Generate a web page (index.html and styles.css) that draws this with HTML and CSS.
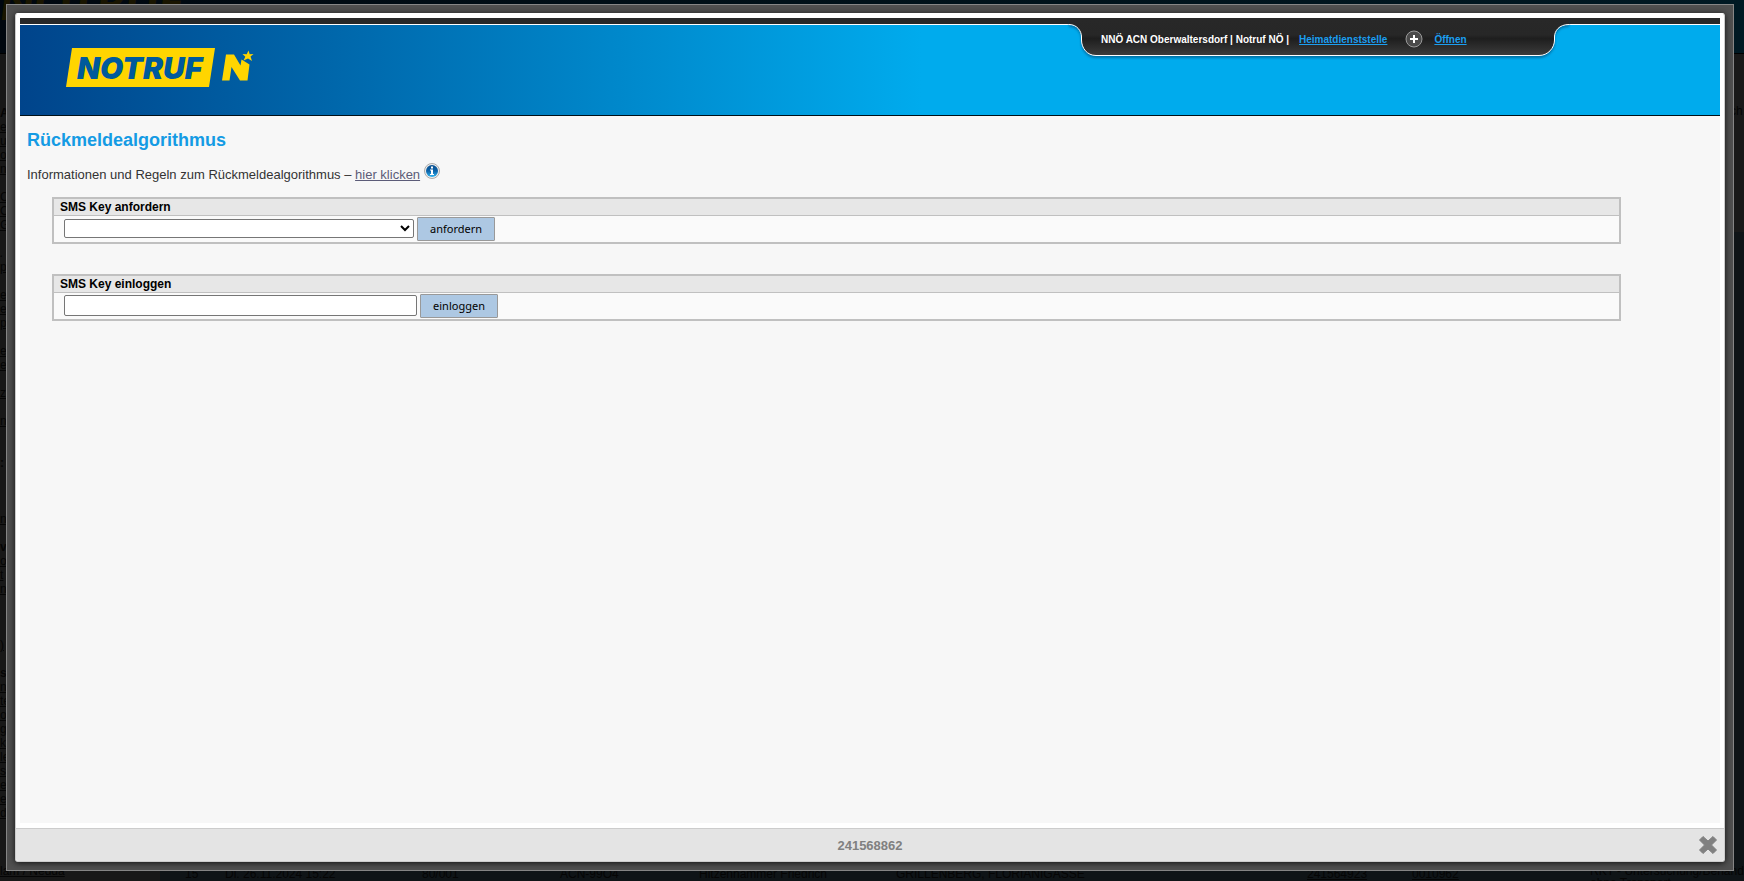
FILE: index.html
```html
<!DOCTYPE html>
<html lang="de">
<head>
<meta charset="utf-8">
<title>Rückmeldealgorithmus</title>
<link rel="stylesheet" href="styles.css">
</head>
<body>
<div class="backdrop" aria-hidden="true">
  <div class="backdrop-banner"><span>NOTRUF</span></div>
  <div class="backdrop-body">
    <div class="backdrop-menu">
      <b>A</b><u>e</u><u>u</u><u>oc</u><u>ni</u><i></i><u>Ob</u><u>Ob</u><u>Gr</u><i></i><i>.</i><u>pe</u><i></i><u>e</u><u>er</u><u>pe</u><i></i><u>er</u><u>er</u><i></i><u>zt</u><i></i><u>nc</u><i></i><i></i><b>:</b><i></i><i></i><i></i><u>ne</u><i></i><b>v</b><u>ou</u><u>t</u><u>n</u><i></i><i></i><i></i><u>)</u><i></i><b>s</b><u>ng</u><u>te</u><u>o</u><u>gr</u><u>ke</u><u>le</u><u>s</u><u>e</u><u>e</u><u>d</u>
    </div>
    <div class="backdrop-aside"><span>ch</span></div>
  </div>
  <div class="backdrop-row">
    <u class="cell-tight">lam / Nedda</u>
    <span>15</span>
    <span>Di. 26.11.2024 15:22</span>
    <span>80/001</span>
    <span>ACN-99O4</span>
    <span>Hitzenhammer Friedrich</span>
    <span>GRILLENBERG, FLORIANIGASSE</span>
    <u>241564923</u>
    <u>0010962</u>
    <span class="cell-tight">RKT - Untersuchung/Behandlung<br>ohne Transport</span>
  </div>
</div>

<div class="frame" role="dialog" aria-label="Rückmeldealgorithmus">
  <div class="panel">
    <div class="page">
      <header class="header">
        <svg class="logo" viewBox="60 42 200 50" role="img" aria-label="Notruf N">
          <path class="yellow" d="M72 48H215L209 87H66Z"/>
          <text class="logo-text" x="77" y="79">NOTRUF</text>
          <path class="yellow" d="M222 80.500L226 54.500H234L240.500 65.500L241.500 59.500L249.500 64.500L247.500 80.500H240L231.500 67L229.500 80.500Z"/>
          <path class="yellow" d="M248.500 50.500L249.700 54.300L253.500 54L250.500 56.500L252 61L248 58.500L243.500 60.500L245.300 56.800L242.500 54L246.700 54.300Z"/>
        </svg>
        <div class="tab">
          <svg class="tab-shape" viewBox="0 0 500 44" preserveAspectRatio="none" aria-hidden="true">
            <defs>
              <linearGradient id="tabFill" x1="0" y1="0" x2="0" y2="1">
                <stop offset="0" stop-color="#282828"/>
                <stop offset=".45" stop-color="#272727"/>
                <stop offset=".55" stop-color="#1e1e1e"/>
                <stop offset="1" stop-color="#3c3c3c"/>
              </linearGradient>
            </defs>
            <path fill="url(#tabFill)" d="M0 0V6.500C8 6.500 12.500 13 12.500 19V22C12.500 30 18 37.500 27 37.500H470C479 37.500 485.500 30 485.500 22V19C485.500 13 490 6.500 500 6.500V0Z"/>
            <path fill="none" stroke="#fff" d="M0 6.500C8 6.500 12.500 13 12.500 19V22C12.500 30 18 37.500 27 37.500H470C479 37.500 485.500 30 485.500 22V19C485.500 13 490 6.500 500 6.500"/>
          </svg>
          <span class="tab-text">NNÖ ACN Oberwaltersdorf | Notruf NÖ |</span>
          <a class="home" href="#">Heimatdienststelle</a>
          <svg class="plus" viewBox="0 0 18 18" aria-hidden="true">
            <circle cx="9" cy="9" r="8" fill="#4a4a4a" stroke="#999"/>
            <path d="M9 5V13M5 9H13" stroke="#fff" stroke-width="2"/>
          </svg>
          <a class="open" href="#">Öffnen</a>
        </div>
      </header>
      <main class="content">
        <h1>Rückmeldealgorithmus</h1>
        <p class="intro"><span>Informationen und Regeln zum Rückmeldealgorithmus – <a href="#">hier klicken</a></span>
          <svg class="info" viewBox="0 0 16 16" aria-hidden="true">
            <defs>
              <linearGradient id="infoFill" x1="0" y1="0" x2="0" y2="1">
                <stop offset="0" stop-color="#0a4f8f"/>
                <stop offset=".5" stop-color="#0b62a8"/>
                <stop offset="1" stop-color="#35b5f0"/>
              </linearGradient>
            </defs>
            <circle cx="8" cy="8" r="7.500" fill="#eee" stroke="#aaa"/>
            <circle cx="8" cy="8" r="6" fill="url(#infoFill)"/>
            <path d="M7 3.500H9V5.500H7ZM6 6.500H9V11H10V12H6V11H7V7.500H6Z" fill="#fff"/>
          </svg>
        </p>
        <form class="box">
          <h2><label for="request">SMS Key anfordern</label></h2>
          <div class="row">
            <select id="request" class="picker"><option></option></select>
            <button type="button">anfordern</button>
          </div>
        </form>
        <form class="box">
          <h2><label for="login">SMS Key einloggen</label></h2>
          <div class="row">
            <input id="login" class="key" type="text">
            <button type="button">einloggen</button>
          </div>
        </form>
      </main>
    </div>
    <footer class="footer">
      <span>241568862</span>
      <button class="close" type="button" aria-label="Schließen">
        <svg viewBox="0 0 18 18" aria-hidden="true"><path d="M4 .500L9 5L14 .500L17.500 4L12.500 9L17.500 14L14 17.500L9 13L4 17.500L.500 14L5.500 9L.500 4Z" fill="#808080" stroke="#808080" stroke-linejoin="round"/></svg>
      </button>
    </footer>
  </div>
</div>
</body>
</html>
```
FILE: styles.css
```css
* { box-sizing: border-box; }

html, body { height: 100%; }

body {
  margin: 0;
  overflow: hidden;
  background: #181818;
  color: #333;
  font-family: "Liberation Sans", Arial, sans-serif;
  font-size: 12px;
}

/* Dimmed page behind the dialog */
.backdrop {
  display: flex;
  flex-direction: column;
  height: 100vh;
  overflow: hidden;
  color: #050505;
}

.backdrop-banner {
  flex: none;
  height: 54px;
  overflow: hidden;
  background: linear-gradient(90deg, #00070f, #001119 50%, #001923);
  border-bottom: 1px solid #000;
  color: #191500;
  font: italic 900 48px/4px Lato, sans-serif;
}

.backdrop-body {
  display: flex;
  flex: 1;
  justify-content: space-between;
  min-height: 0;
}

.backdrop-menu {
  display: flex;
  flex-direction: column;
  width: 20px;
  padding-top: 52px;
  line-height: 14px;
}

.backdrop-menu > * { flex: none; height: 14px; }

.backdrop-aside {
  width: 14px;
  padding-top: 50px;
  background: linear-gradient(#191919 178px, #0f1417 178px);
}

.backdrop-row {
  display: grid;
  flex: none;
  grid-template-columns: 185px 40px 197px 138px 139px 197px 411px 105px 178px 1fr;
  height: 16px;
  background: linear-gradient(90deg, #181818 160px, #0f1417 160px);
  line-height: 18px;
  white-space: nowrap;
}

.backdrop-row .cell-tight { line-height: 12px; }

/* Dialog */
.frame {
  position: fixed;
  inset: 4px 10px 10px 6px;
  display: flex;
  padding: 8px;
  background: #505050;
  border: 1px solid #868686;
}

.panel {
  display: flex;
  flex: 1;
  flex-direction: column;
  background: #fff;
  border: 1px solid #ccc;
  border-top-color: #fff;
  border-radius: 3px;
  box-shadow: 0 1px 6px #111;
}

.page {
  flex: 1;
  margin: 4px 4px 5px;
  background: #f7f7f7;
}

.header {
  position: relative;
  height: 98px;
  padding: 24px 0 0 40px;
  background: linear-gradient(#282828 6px, #fff 6px, #fff 7px, transparent 7px),
    linear-gradient(90deg, #00448b, #0066aa 18%, #00abed 53%);
  border-bottom: 1px solid #001018;
}

.logo { display: block; width: 200px; height: 50px; }
.yellow { fill: #ffd500; }

.logo-text {
  fill: #005a9c;
  font: italic 900 30px Inter, sans-serif;
}

.tab {
  position: absolute;
  top: 0;
  right: 151px;
  display: flex;
  align-items: center;
  width: 500px;
  height: 44px;
  padding: 0 32px 2px;
  color: #fff;
  font-size: 10px;
  font-weight: bold;
  white-space: nowrap;
}

.tab-shape {
  position: absolute;
  inset: 0;
  width: 100%;
  height: 44px;
  filter: drop-shadow(0 2px 1px rgba(0, 60, 100, .5));
}

.tab-text, .home, .plus, .open { position: relative; }
.tab a { color: #1c9ff0; }
.home { margin-left: 10px; }
.plus { width: 18px; height: 18px; margin: 0 11px 0 18px; }

.content { padding: 14px 7px; }

h1 {
  margin: 0;
  color: #149be4;
  font-size: 18px;
  line-height: 20px;
}

.intro {
  display: flex;
  gap: 4px;
  align-items: flex-start;
  margin: 13px 0 12px;
  font-size: 13px;
  line-height: 20px;
}

.intro span { padding-top: 2px; }
.intro a { color: #5c5c78; }
.info { width: 16px; height: 16px; }

.box {
  margin: 0 92px 30px 25px;
  background: #fafafa;
  border: 2px solid #c0c0c0;
}

h2 {
  margin: 0;
  padding: 0 6px;
  background: #e7e7e7;
  border-bottom: 1px solid #c0c0c0;
  color: #000;
  font-size: 12px;
  line-height: 16px;
}

.row {
  display: flex;
  align-items: center;
  gap: 3px;
  height: 26px;
  padding: 0 0 1px 10px;
}

.picker, .key {
  margin: 0;
  background: #fff;
  border: 1px solid #767676;
  border-radius: 2px;
}

.picker { width: 350px; height: 19px; }
.key { width: 353px; height: 21px; }

.row button {
  width: 78px;
  height: 24px;
  padding: 0 0 1px;
  background: #adc8e3;
  border: 1px solid #999;
  border-radius: 1px;
  color: #000;
  font: 11px "Noto Sans", sans-serif;
}

.footer {
  position: relative;
  display: flex;
  align-items: center;
  justify-content: center;
  height: 33px;
  background: #e4e4e4;
  border-top: 1px solid #ccc;
  border-radius: 0 0 3px 3px;
  color: #808080;
  font-size: 13px;
  font-weight: bold;
}

.close {
  position: absolute;
  right: 7px;
  width: 18px;
  height: 18px;
  padding: 0;
  background: none;
  border: 0;
}

.close svg { display: block; width: 18px; height: 18px; }
```
